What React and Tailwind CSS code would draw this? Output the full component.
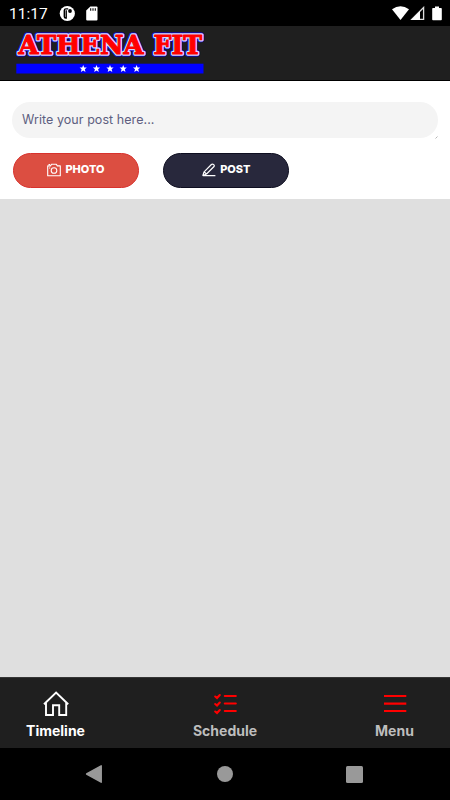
import React, { useState } from "react";

const StatusBar = () => (
  <div className="flex h-[26px] shrink-0 items-center justify-between bg-black pl-[9px] pr-[8px] text-white">
    <div className="flex items-center">
      <span className="w-[39px] whitespace-nowrap pt-[2px] font-['Roboto',sans-serif] text-[15.5px] leading-[24px]">
        11:17
      </span>
      <svg className="ml-[11px]" width="17" height="17" viewBox="0 0 17 17">
        <circle cx="8.3" cy="8.5" r="7.6" fill="#fff" />
        <path
          d="M9.2 3.9H6.9Q5.3 3.9 5.3 5.5V11.5Q5.3 13 6.7 13H7.2V5.2"
          fill="none"
          stroke="#000"
          strokeWidth="1.4"
        />
        <circle cx="11" cy="6" r="1.9" fill="#000" />
      </svg>
      <svg className="ml-[10px]" width="12" height="15" viewBox="0 0 12 15">
        <path
          d="M4.3 0.5H10.5Q11.5 0.5 11.5 1.5V13.5Q11.5 14.5 10.5 14.5H1.2Q0.2 14.5 0.2 13.5V4.5Z"
          fill="#fff"
        />
        <path d="M4.7 2.3v2.5M7 2.3v2.5M9.3 2.3v2.5" stroke="#000" strokeWidth="1.1" />
      </svg>
    </div>
    <div className="flex items-center">
      <svg width="17" height="15" viewBox="0 0 17 15">
        <path d="M0 3.3Q8.5 -3 17 3.3L8.5 14Z" fill="#fff" />
      </svg>
      <svg className="ml-[1px]" width="15" height="15" viewBox="0 0 15 15">
        <path d="M13.6 1.5V13.4H1.8Z" fill="none" stroke="#ddd" strokeWidth="1.3" />
        <path d="M1 14L10 5V14Z" fill="#fff" />
      </svg>
      <svg className="ml-[7px]" width="10" height="15" viewBox="0 0 10 15">
        <path
          d="M3 0.4h4v1.6h2q.8 0 .8 .8v10.6q0 .8-.8 .8H1q-.8 0-.8-.8V2.8q0-.8 .8-.8h2z"
          fill="#fff"
        />
      </svg>
    </div>
  </div>
);

const starPositions = [67.2, 80.5, 94, 107.2, 120.6];

const LogoText = () => (
  <>
    <text x="2.5" y="28.4" textLength="125" lengthAdjust="spacingAndGlyphs">ATHENA</text>
    <text x="137.5" y="28.4" textLength="48.5" lengthAdjust="spacingAndGlyphs">FIT</text>
  </>
);

const Logo = () => (
  <svg className="ml-[16px]" width="190" height="54" viewBox="0 0 190 54">
    <g
      fontFamily="'DejaVu Serif', serif"
      fontWeight="bold"
      fontSize="26"
      strokeLinejoin="round"
    >
      <g fill="#0000d8" stroke="#0000d8" strokeWidth="5">
        <LogoText />
      </g>
      <g fill="#d3d8ff" stroke="#d3d8ff" strokeWidth="3.6">
        <LogoText />
      </g>
      <g fill="#ff0000" stroke="#ff0000" strokeWidth="1.1">
        <LogoText />
      </g>
    </g>
    <rect x="0.3" y="37.7" width="187.2" height="9.8" fill="#0000ff" />
    {starPositions.map((x) => (
      <path
        key={x}
        transform={`translate(${x} 42.8)`}
        d="M0-3.8L1-1.2H3.6L1.6.5L2.3 3.2L0 1.6L-2.3 3.2L-1.6.5L-3.6-1.2H-1Z"
        fill="#fff"
      />
    ))}
  </svg>
);

const PostBox = () => {
  const [post, setPost] = useState("");

  return (
    <section className="h-[118px] shrink-0 bg-white px-[12px] pt-[21px]">
      <div className="relative">
        <textarea
          value={post}
          onChange={(e) => setPost(e.target.value)}
          placeholder="Write your post here..."
          className="block h-[36px] w-[426px] resize-none overflow-hidden rounded-[18px] bg-[#f4f4f4] px-[10px] py-[8px] font-['Inter',sans-serif] text-[12.5px] leading-[20px] tracking-[0.06px] text-[#5e5f80] outline-none placeholder:text-[#5e5f80]"
        />
        <svg className="absolute -bottom-px right-0" width="3" height="3" viewBox="0 0 3 3">
          <path d="M0.5 2.5L2.5 0.5" stroke="#b5b5b5" />
        </svg>
      </div>
      <div className="mt-[15px] flex gap-[24.4px] pl-px font-['Inter',sans-serif] text-[11px] font-extrabold text-white">
        <button className="flex h-[35px] w-[126px] items-center justify-center rounded-full border border-[#d8322d] bg-[#dc4e41] pb-[2px]">
          <svg
            className="mr-[4px]"
            width="14"
            height="14"
            viewBox="0 0 14 14"
            fill="none"
            stroke="#fff"
            strokeWidth="1.1"
          >
            <path d="M.7 2.9H3.5L4.5 1.2H9.3L10.3 2.9H13.3V12.8H.7Z" strokeLinejoin="round" />
            <circle cx="7" cy="7.5" r="2.8" />
            <path d="M1.5 1.5H3M2 5H3.2" />
          </svg>
          PHOTO
        </button>
        <button className="flex h-[35px] w-[126px] items-center justify-center rounded-full border border-[#0e0e20] bg-[#28283c] pb-[2px]">
          <svg
            className="mr-[4px]"
            width="14"
            height="14"
            viewBox="0 0 14 14"
            fill="none"
            stroke="#fff"
            strokeWidth="1.2"
            strokeLinejoin="round"
          >
            <path d="M.9 12.5L2.1 8.8L9.4 1.5Q10.5.5 11.7 1.6Q12.8 2.7 11.8 3.8L4.5 11ZM2.3 8.9L4.4 11M.8 12.6H13.4" />
          </svg>
          POST
        </button>
      </div>
    </section>
  );
};

const HomeIcon = () => (
  <svg
    width="26"
    height="26"
    viewBox="0 0 26 26"
    fill="none"
    stroke="#fff"
    strokeWidth="1.9"
    strokeLinejoin="miter"
  >
    <path d="M1 13.2L13.1 1.5L25.2 13.2M3 11.5V24H10V14.2H16.2V24H23.2V11.5" />
  </svg>
);

const ScheduleIcon = () => (
  <svg
    width="26"
    height="26"
    viewBox="0 0 26 26"
    fill="none"
    stroke="#ff0000"
    strokeWidth="2.1"
    strokeLinecap="round"
  >
    <path d="M12.8 5H23.8M12.8 12.5H23.8M12.8 20H23.8" />
    <path d="M3.2 5.5L5 7L7.8 4M3.2 13L5 14.5L7.8 11.5M3.2 20.5L5 22L7.8 19" />
  </svg>
);

const MenuIcon = () => (
  <svg width="26" height="26" viewBox="0 0 26 26" stroke="#ff0000" strokeWidth="2.1">
    <path d="M2 5H24.3M2 12.6H24.3M2 20H24.3" />
  </svg>
);

const tabs = [
  { name: "Timeline", icon: HomeIcon, className: "w-[111px] text-white" },
  { name: "Schedule", icon: ScheduleIcon, className: "w-[111px] text-[#bdbdbd]" },
  { name: "Menu", icon: MenuIcon, className: "w-[111px] text-[#bdbdbd]" },
];

const TabBar = () => (
  <nav className="flex h-[71px] shrink-0 justify-between border-t border-[#363636] bg-[#1f1f1f]">
    {tabs.map(({ name, icon: Icon, className }) => (
      <button key={name} className={`flex flex-col items-center pt-[12.5px] ${className}`}>
        <Icon />
        <span className="mt-[4.5px] font-['Inter',sans-serif] text-[14px] font-bold leading-[20px]">
          {name}
        </span>
      </button>
    ))}
  </nav>
);

const SystemNav = () => (
  <div className="flex h-[52px] shrink-0 items-center justify-between bg-black pl-[85px] pr-[87px]">
    <svg width="18" height="20" viewBox="0 0 18 20">
      <path
        d="M1.6 10L16.2 1.8V18.2Z"
        fill="#999"
        stroke="#999"
        strokeWidth="1.5"
        strokeLinejoin="round"
      />
    </svg>
    <div className="size-[16px] rounded-full bg-[#999]" />
    <div className="size-[17px] rounded-[1.5px] bg-[#999]" />
  </div>
);

const App = () => {
  return (
    <div className="flex h-[800px] w-[450px] flex-col overflow-hidden bg-[#dfdfdf]">
      <StatusBar />
      <header className="h-[55px] shrink-0 border-b border-black bg-[#1f1f1f]">
        <Logo />
      </header>
      <PostBox />
      {/* Empty timeline */}
      <main className="flex-1" />
      <TabBar />
      <SystemNav />
    </div>
  );
};

export default App;
